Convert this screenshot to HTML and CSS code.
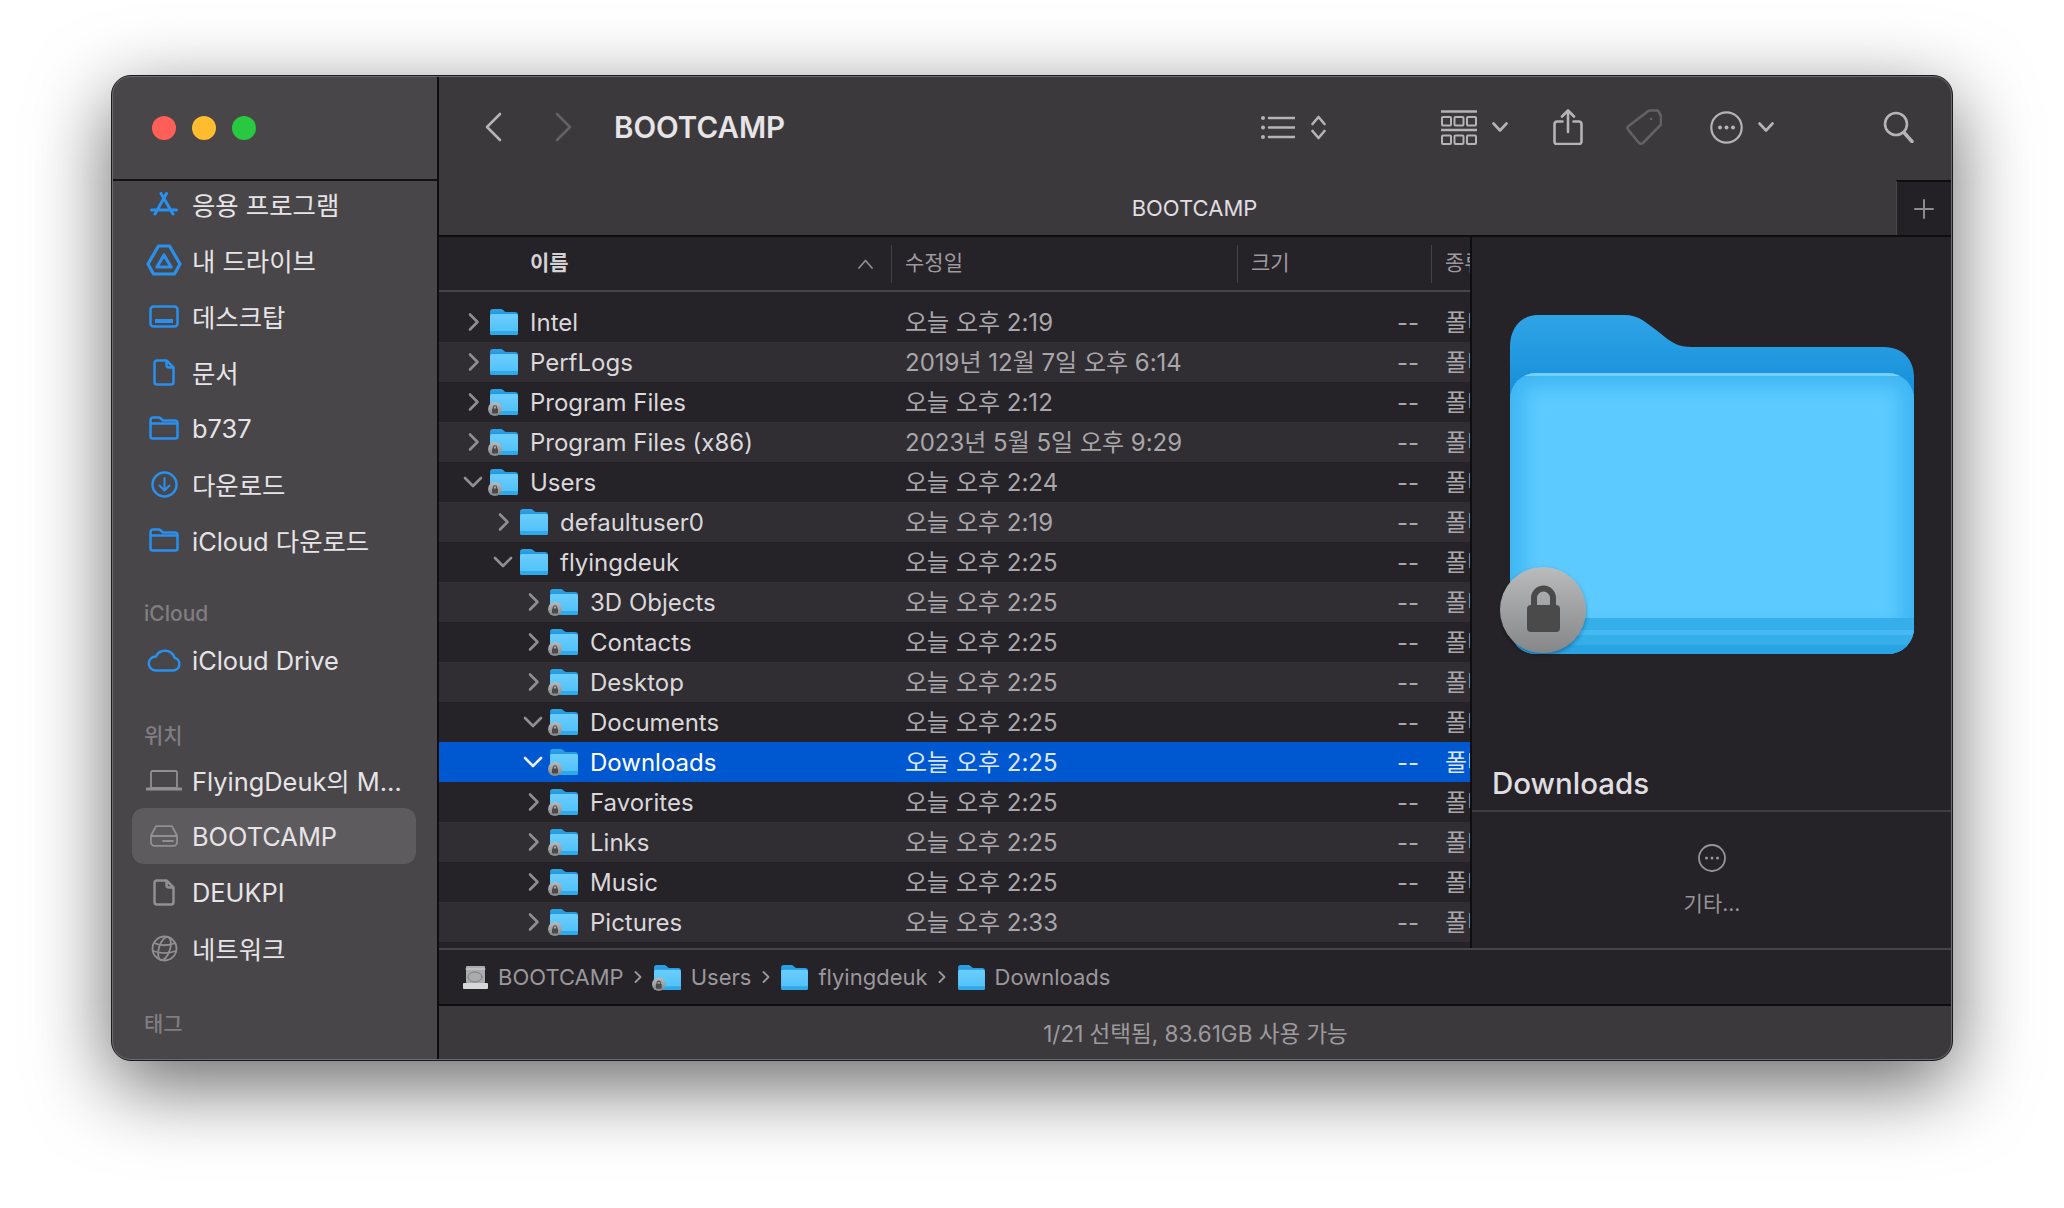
FILE: index.html
```html
<!DOCTYPE html>
<html lang="ko">

<head>
    <meta charset="UTF-8">
    <title>BOOTCAMP</title>
    <link rel="stylesheet" href="styles.css">
</head>

<body>
    <svg class="defs" width="0" height="0">
        <defs>
            <linearGradient id="fBack" x1="0" y1="0" x2="0" y2="1">
                <stop offset="0" stop-color="#2fa3e6" />
                <stop offset="1" stop-color="#0f8ad6" />
            </linearGradient>
            <linearGradient id="fFront" x1="0" y1="0" x2="0" y2="1">
                <stop offset="0" stop-color="#6ccdfb" />
                <stop offset="1" stop-color="#4cc0fa" />
            </linearGradient>
            <linearGradient id="badge" x1="0" y1="0" x2="0" y2="1">
                <stop offset="0" stop-color="#b9bbbd" />
                <stop offset="1" stop-color="#858687" />
            </linearGradient>
            <symbol id="folder" viewBox="0 0 28 26">
                <path fill="url(#fBack)" d="M0 3a3 3 0 0 1 3-3h8c2 0 3 3 5 3h9a3 3 0 0 1 3 3v6H0z" />
                <path fill="url(#fFront)" d="M0 7a2 2 0 0 1 2-2h24a2 2 0 0 1 2 2v17a2 2 0 0 1-2 2H2a2 2 0 0 1-2-2z" />
                <path fill="#2fa9ea" d="M0 22h28v2a2 2 0 0 1-2 2H2a2 2 0 0 1-2-2z" />
            </symbol>
            <symbol id="folderLock" viewBox="-3 0 31 29">
                <use href="#folder" x="0" y="0" width="28" height="26" />
                <circle cx="5" cy="20" r="7" fill="url(#badge)" />
                <rect x="2" y="19.5" width="6" height="5" rx="1" fill="#4a4a4a" />
                <path d="M3.3 20v-1.6a1.7 1.7 0 0 1 3.4 0V20" fill="none" stroke="#4a4a4a" stroke-width="1.1" />
            </symbol>
            <symbol id="chevR" viewBox="0 0 22 20">
                <path d="M8 2.5 15.5 10 8 17.5" />
            </symbol>
            <symbol id="chevD" viewBox="0 0 22 20">
                <path d="M3 6l8 8 8-8" />
            </symbol>
            <symbol id="sideFolder" viewBox="0 0 30 24">
                <path d="M1.5 4A2.5 2.5 0 0 1 4 1.5h6.5l3.5 3h12A2.5 2.5 0 0 1 28.5 7v13.5a2 2 0 0 1-2 2h-23a2 2 0 0 1-2-2zM1.5 7.5h27" />
            </symbol>
            <symbol id="sideDoc" viewBox="0 0 22 27">
                <path d="M4 1.5h9.5l7 7V23a2.5 2.5 0 0 1-2.5 2.5H4A2.5 2.5 0 0 1 1.5 23V4A2.5 2.5 0 0 1 4 1.5zM13.5 1.5V6a2.5 2.5 0 0 0 2.5 2.5h4.5" />
            </symbol>
        </defs>
    </svg>

    <div class="window">
        <aside class="sidebar">
            <div class="lights">
                <span class="light red"></span>
                <span class="light yellow"></span>
                <span class="light green"></span>
            </div>
            <div class="side-list">
                <div class="side-item">
                    <span class="side-icon blue"><svg width="28" height="25" viewBox="0 0 28 25"><path d="M16.5 1.5 5 22M11 1.5 23 22M1.5 18h25" stroke-width="3" /></svg></span>
                    <span class="side-label">응용 프로그램</span>
                </div>
                <div class="side-item">
                    <span class="side-icon blue"><svg width="36" height="32" viewBox="0 0 36 32"><path d="M12.5 2h11L34 20l-5.500 10h-21L2 20zM18 11l7 12H11z" stroke-width="3.2" /></svg></span>
                    <span class="side-label">내 드라이브</span>
                </div>
                <div class="side-item">
                    <span class="side-icon blue"><svg width="30" height="23" viewBox="0 0 30 23"><rect x="1.5" y="1.5" width="27" height="20" rx="3" /><path d="M6 16h18" stroke-width="4" stroke-linecap="butt" /></svg></span>
                    <span class="side-label">데스크탑</span>
                </div>
                <div class="side-item">
                    <span class="side-icon blue"><svg width="22" height="27"><use href="#sideDoc" /></svg></span>
                    <span class="side-label">문서</span>
                </div>
                <div class="side-item">
                    <span class="side-icon blue"><svg width="30" height="24"><use href="#sideFolder" /></svg></span>
                    <span class="side-label">b737</span>
                </div>
                <div class="side-item">
                    <span class="side-icon blue"><svg width="27" height="27" viewBox="0 0 27 27"><circle cx="13.5" cy="13.5" r="12" /><path d="M13.5 7v12M8.5 14.5l5 5 5-5" stroke-width="2" /></svg></span>
                    <span class="side-label">다운로드</span>
                </div>
                <div class="side-item">
                    <span class="side-icon blue"><svg width="30" height="24"><use href="#sideFolder" /></svg></span>
                    <span class="side-label">iCloud 다운로드</span>
                </div>

                <div class="side-head">iCloud</div>
                <div class="side-item">
                    <span class="side-icon blue"><svg width="34" height="23" viewBox="0 0 34 23"><path d="M8.5 21.5H26a6.5 6.5 0 0 0 1.5-12.8A10 10 0 0 0 9 7.5a7 7 0 0 0-.5 14z" /></svg></span>
                    <span class="side-label">iCloud Drive</span>
                </div>

                <div class="side-head">위치</div>
                <div class="side-item">
                    <span class="side-icon gray"><svg width="36" height="21" viewBox="0 0 36 21"><rect x="5" y="1" width="26" height="17" rx="1.5" stroke-width="1.8" /><path d="M0 19h36" stroke-width="3" /></svg></span>
                    <span class="side-label">FlyingDeuk의 MacBook Pro</span>
                </div>
                <div class="side-item active">
                    <span class="side-icon gray"><svg width="30" height="22" viewBox="0 0 30 22"><path d="M7 1.2h16l5 9.3v7a3.300 3.300 0 0 1-3.300 3.300H5.300A3.300 3.300 0 0 1 2 17.500v-7zM2 11h26M14 16h10" stroke-width="1.8" /></svg></span>
                    <span class="side-label">BOOTCAMP</span>
                </div>
                <div class="side-item">
                    <span class="side-icon gray"><svg width="22" height="27"><use href="#sideDoc" /></svg></span>
                    <span class="side-label">DEUKPI</span>
                </div>
                <div class="side-item">
                    <span class="side-icon gray"><svg width="27" height="27" viewBox="0 0 27 27"><g stroke-width="1.8"><circle cx="13.5" cy="13.5" r="12" /><ellipse cx="13.5" cy="13.5" rx="5.5" ry="12" transform="rotate(18 13.5 13.5)" /><path d="M3 8c6 3 15 3 21 0M2 16c7 2.5 16 2.5 23 0" /></g></svg></span>
                    <span class="side-label">네트워크</span>
                </div>

                <div class="side-head">태그</div>
            </div>
        </aside>

        <main class="main">
            <header class="toolbar">
                <svg class="tool back" width="22" height="32" viewBox="0 0 22 32"><path d="M17 3 4 16l13 13" /></svg>
                <svg class="tool forward dim" width="22" height="32" viewBox="0 0 22 32"><path d="M5 3l13 13L5 29" /></svg>
                <h1 class="title">BOOTCAMP</h1>
                <svg class="tool t-list" width="34" height="23" viewBox="0 0 34 23"><path d="M8 2h26M8 11.5h26M8 21h26" /><g fill="currentColor" stroke="none"><circle cx="2" cy="2" r="2" /><circle cx="2" cy="11.5" r="2" /><circle cx="2" cy="21" r="2" /></g></svg>
                <svg class="tool t-updown" width="15" height="25" viewBox="0 0 15 25"><path d="M1.5 9l6-7 6 7M1.5 16l6 7 6-7" /></svg>
                <svg class="tool t-grid" width="36" height="35" viewBox="0 0 36 35"><path d="M0 1.5h36M0 20h36" /><g stroke-width="2"><rect x="1" y="7" width="9" height="8.5" rx="1" /><rect x="13.5" y="7" width="9" height="8.5" rx="1" /><rect x="26" y="7" width="9" height="8.5" rx="1" /><rect x="1" y="25.5" width="9" height="8.5" rx="1" /><rect x="13.5" y="25.5" width="9" height="8.5" rx="1" /><rect x="26" y="25.5" width="9" height="8.5" rx="1" /></g></svg>
                <svg class="tool t-chev" width="16" height="10" viewBox="0 0 16 10"><path d="M1.5 1.5 8 8.5l6.5-7" /></svg>
                <svg class="tool t-share" width="30" height="36" viewBox="0 0 30 36"><path d="M15 1.5V23M9 7.5l6-6 6 6" /><path d="M9.5 12.5H4A2.5 2.5 0 0 0 1.5 15v17.5A2.5 2.5 0 0 0 4 35h22a2.5 2.5 0 0 0 2.5-2.5V15a2.5 2.5 0 0 0-2.5-2.5h-5.5" /></svg>
                <svg class="tool t-tag dim" width="36" height="36" viewBox="0 0 36 36"><path d="M23 1.5h9l3 5.5v8.500L17 34q-2 1.500-4 0L2 20.500q-1-1.500 0-3z" /><circle cx="25" cy="10" r="1.3" fill="currentColor" stroke="none" /></svg>
                <svg class="tool t-more" width="33" height="33" viewBox="0 0 33 33"><circle cx="16.5" cy="16.5" r="15.2" stroke-width="2.2" /><g fill="currentColor" stroke="none"><circle cx="10" cy="16.5" r="2" /><circle cx="16.5" cy="16.5" r="2" /><circle cx="23" cy="16.5" r="2" /></g></svg>
                <svg class="tool t-chev" width="16" height="10" viewBox="0 0 16 10"><path d="M1.5 1.5 8 8.5l6.5-7" /></svg>
                <svg class="tool t-search" width="31" height="32" viewBox="0 0 31 32"><circle cx="13" cy="13" r="11" /><path d="M21 21.5l8 9" stroke-width="3.5" /></svg>
            </header>

            <div class="tabbar">
                <div class="tab-label">BOOTCAMP</div>
                <div class="tab-add"><svg width="20" height="20" viewBox="0 0 20 20"><path d="M10 1v18M1 10h18" /></svg></div>
            </div>

            <div class="content">
                <section class="table">
                    <div class="thead">
                        <div class="th th-name">
                            <span>이름</span>
                            <svg width="15" height="10" viewBox="0 0 15 10"><path d="M1 9l6.5-7.500L14 9" /></svg>
                        </div>
                        <div class="th th-date">수정일</div>
                        <div class="th th-size">크기</div>
                        <div class="th th-kind">종류</div>
                    </div>
                    <div class="tbody">
                        <div class="row lvl0"><div class="c-name"><svg class="chev"><use href="#chevR" /></svg><svg class="ficon"><use href="#folder" /></svg><span>Intel</span></div><div class="c-date">오늘 오후 2:19</div><div class="c-size">--</div><div class="c-kind">폴더</div></div>
                        <div class="row lvl0"><div class="c-name"><svg class="chev"><use href="#chevR" /></svg><svg class="ficon"><use href="#folder" /></svg><span>PerfLogs</span></div><div class="c-date">2019년 12월 7일 오후 6:14</div><div class="c-size">--</div><div class="c-kind">폴더</div></div>
                        <div class="row lvl0"><div class="c-name"><svg class="chev"><use href="#chevR" /></svg><svg class="ficon lock"><use href="#folderLock" /></svg><span>Program Files</span></div><div class="c-date">오늘 오후 2:12</div><div class="c-size">--</div><div class="c-kind">폴더</div></div>
                        <div class="row lvl0"><div class="c-name"><svg class="chev"><use href="#chevR" /></svg><svg class="ficon lock"><use href="#folderLock" /></svg><span>Program Files (x86)</span></div><div class="c-date">2023년 5월 5일 오후 9:29</div><div class="c-size">--</div><div class="c-kind">폴더</div></div>
                        <div class="row lvl0"><div class="c-name"><svg class="chev"><use href="#chevD" /></svg><svg class="ficon lock"><use href="#folderLock" /></svg><span>Users</span></div><div class="c-date">오늘 오후 2:24</div><div class="c-size">--</div><div class="c-kind">폴더</div></div>
                        <div class="row lvl1"><div class="c-name"><svg class="chev"><use href="#chevR" /></svg><svg class="ficon"><use href="#folder" /></svg><span>defaultuser0</span></div><div class="c-date">오늘 오후 2:19</div><div class="c-size">--</div><div class="c-kind">폴더</div></div>
                        <div class="row lvl1"><div class="c-name"><svg class="chev"><use href="#chevD" /></svg><svg class="ficon"><use href="#folder" /></svg><span>flyingdeuk</span></div><div class="c-date">오늘 오후 2:25</div><div class="c-size">--</div><div class="c-kind">폴더</div></div>
                        <div class="row lvl2"><div class="c-name"><svg class="chev"><use href="#chevR" /></svg><svg class="ficon lock"><use href="#folderLock" /></svg><span>3D Objects</span></div><div class="c-date">오늘 오후 2:25</div><div class="c-size">--</div><div class="c-kind">폴더</div></div>
                        <div class="row lvl2"><div class="c-name"><svg class="chev"><use href="#chevR" /></svg><svg class="ficon lock"><use href="#folderLock" /></svg><span>Contacts</span></div><div class="c-date">오늘 오후 2:25</div><div class="c-size">--</div><div class="c-kind">폴더</div></div>
                        <div class="row lvl2"><div class="c-name"><svg class="chev"><use href="#chevR" /></svg><svg class="ficon lock"><use href="#folderLock" /></svg><span>Desktop</span></div><div class="c-date">오늘 오후 2:25</div><div class="c-size">--</div><div class="c-kind">폴더</div></div>
                        <div class="row lvl2"><div class="c-name"><svg class="chev"><use href="#chevD" /></svg><svg class="ficon lock"><use href="#folderLock" /></svg><span>Documents</span></div><div class="c-date">오늘 오후 2:25</div><div class="c-size">--</div><div class="c-kind">폴더</div></div>
                        <div class="row lvl2 selected"><div class="c-name"><svg class="chev"><use href="#chevD" /></svg><svg class="ficon lock"><use href="#folderLock" /></svg><span>Downloads</span></div><div class="c-date">오늘 오후 2:25</div><div class="c-size">--</div><div class="c-kind">폴더</div></div>
                        <div class="row lvl2"><div class="c-name"><svg class="chev"><use href="#chevR" /></svg><svg class="ficon lock"><use href="#folderLock" /></svg><span>Favorites</span></div><div class="c-date">오늘 오후 2:25</div><div class="c-size">--</div><div class="c-kind">폴더</div></div>
                        <div class="row lvl2"><div class="c-name"><svg class="chev"><use href="#chevR" /></svg><svg class="ficon lock"><use href="#folderLock" /></svg><span>Links</span></div><div class="c-date">오늘 오후 2:25</div><div class="c-size">--</div><div class="c-kind">폴더</div></div>
                        <div class="row lvl2"><div class="c-name"><svg class="chev"><use href="#chevR" /></svg><svg class="ficon lock"><use href="#folderLock" /></svg><span>Music</span></div><div class="c-date">오늘 오후 2:25</div><div class="c-size">--</div><div class="c-kind">폴더</div></div>
                        <div class="row lvl2"><div class="c-name"><svg class="chev"><use href="#chevR" /></svg><svg class="ficon lock"><use href="#folderLock" /></svg><span>Pictures</span></div><div class="c-date">오늘 오후 2:33</div><div class="c-size">--</div><div class="c-kind">폴더</div></div>
                    </div>
                </section>

                <section class="preview">
                    <svg class="big-folder" width="414" height="345" viewBox="0 0 414 345">
                        <defs>
                            <filter id="soft" x="-10%" y="-10%" width="120%" height="120%"><feGaussianBlur stdDeviation="9" /></filter>
                            <filter id="badgeShadow" x="-20%" y="-20%" width="140%" height="140%"><feDropShadow dx="0" dy="2" stdDeviation="2" flood-color="#000" flood-opacity=".35" /></filter>
                            <clipPath id="frontClip"><path d="M10 84a26 26 0 0 1 26-26h352a26 26 0 0 1 26 26v229a26 26 0 0 1-26 26H36a26 26 0 0 1-26-26z" /></clipPath>
                        </defs>
                        <path fill="url(#fBack)" d="M10 32C10 12 22 0 38 0h86c16 0 22 8 36 18 12 10 18 14 32 14h192c20 0 30 14 30 30v40H10z" />
                        <g clip-path="url(#frontClip)">
                            <rect x="10" y="58" width="404" height="281" fill="#3fb6f4" />
                            <rect x="24" y="72" width="376" height="240" fill="#5ccaff" filter="url(#soft)" />
                            <rect x="10" y="58" width="404" height="3" fill="#74d0fb" />
                            <rect x="10" y="303" width="404" height="36" fill="#35aeea" />
                            <rect x="10" y="315" width="404" height="5" fill="#44b9f3" />
                            <rect x="10" y="330" width="404" height="9" fill="#28a3e4" />
                        </g>
                        <circle cx="43" cy="295" r="43" fill="url(#badge)" filter="url(#badgeShadow)" />
                        <path d="M34 291V283a9.5 9.5 0 0 1 19 0v8" fill="none" stroke="#4a4a4a" stroke-width="6" />
                        <rect x="27" y="290" width="33" height="27" rx="4" fill="#4a4a4a" />
                    </svg>
                    <h2 class="preview-name">Downloads</h2>
                    <div class="preview-actions">
                        <svg width="28" height="28" viewBox="0 0 28 28"><circle cx="14" cy="14" r="13" /><g fill="currentColor" stroke="none"><circle cx="8.5" cy="14" r="1.5" /><circle cx="14" cy="14" r="1.5" /><circle cx="19.5" cy="14" r="1.5" /></g></svg>
                        <span>기타...</span>
                    </div>
                </section>
            </div>

            <nav class="pathbar">
                <svg class="disk" width="25" height="25" viewBox="0 0 25 25"><rect x="3" y="1" width="19" height="17" rx="1" fill="#a9abac" /><rect x="0" y="18" width="25" height="6" rx="1" fill="#d6d7d7" /><ellipse cx="12" cy="12" rx="7" ry="5" fill="none" stroke="#7c7e80" /><path d="M3 4h19" stroke="#cfd0d1" /></svg>
                <span class="crumb">BOOTCAMP</span>
                <svg class="sep" width="8" height="12" viewBox="0 0 8 12"><path d="M1.5 1 6.5 6l-5 5" /></svg>
                <svg class="ficon lock"><use href="#folderLock" /></svg>
                <span class="crumb">Users</span>
                <svg class="sep" width="8" height="12" viewBox="0 0 8 12"><path d="M1.5 1 6.5 6l-5 5" /></svg>
                <svg class="ficon"><use href="#folder" /></svg>
                <span class="crumb">flyingdeuk</span>
                <svg class="sep" width="8" height="12" viewBox="0 0 8 12"><path d="M1.5 1 6.5 6l-5 5" /></svg>
                <svg class="ficon"><use href="#folder" /></svg>
                <span class="crumb">Downloads</span>
            </nav>

            <footer class="statusbar">1/21 선택됨, 83.61GB 사용 가능</footer>
        </main>
    </div>
</body>

</html>
```

FILE: styles.css
```css
/* Finder window, dark mode */
* {
    box-sizing: border-box;
}

body {
    margin: 0;
    height: 1208px;
    padding: 75px 111px 0;
    background: #ffffff;
    font-family: Inter, "Noto Sans CJK KR", sans-serif;
    overflow: hidden;
}

svg {
    fill: none;
    stroke: currentColor;
    stroke-linecap: round;
    stroke-linejoin: round;
    flex: none;
}

.defs {
    position: absolute;
}

.window {
    position: relative;
    display: flex;
    width: 1842px;
    height: 986px;
    border: 1px solid #1b1a1c;
    border-radius: 20px;
    overflow: hidden;
    background: #3c393d;
    box-shadow: 0 24px 80px rgba(0, 0, 0, 0.6);
}

.window::after {
    content: "";
    position: absolute;
    inset: 0;
    border: 1.5px solid #6c6a6d;
    border-radius: 19px;
    pointer-events: none;
}

/* Sidebar */
.sidebar {
    width: 327px;
    flex: none;
    background: #484649;
    border-right: 2px solid #0e0d0f;
    overflow: hidden;
}

.lights {
    display: flex;
    gap: 16px;
    align-items: center;
    height: 105px;
    padding: 0 0 0 40px;
    border-bottom: 2px solid #121113;
}

.light {
    width: 24px;
    height: 24px;
    border-radius: 50%;
}

.red {
    background: #ff5f57;
}

.yellow {
    background: #febc2e;
}

.green {
    background: #28c840;
}

.side-list {
    margin-top: -5px;
}

.side-item {
    display: flex;
    align-items: center;
    gap: 8px;
    height: 56px;
    margin: 0 21px 0 20px;
    padding: 0 10px 0 12px;
    border-radius: 12px;
    color: #e6e4e6;
    font-size: 25.4px;
}

.side-item.active {
    background: #5e5b5f;
}

.side-icon {
    display: flex;
    align-items: center;
    justify-content: center;
    width: 40px;
    flex: none;
}

.side-icon svg {
    stroke-width: 2.5;
}

.blue {
    color: #2a90ee;
}

.gray {
    color: #918f92;
}

.side-label {
    white-space: nowrap;
    overflow: hidden;
    text-overflow: ellipsis;
}

.side-head {
    display: flex;
    align-items: center;
    height: 37px;
    margin-top: 27px;
    padding-left: 32px;
    color: #807e81;
    font-size: 21px;
    font-weight: 500;
}

/* Toolbar */
.main {
    flex: 1;
    min-width: 0;
    display: flex;
    flex-direction: column;
}

.toolbar {
    display: flex;
    align-items: center;
    height: 104px;
    padding: 0 38px 2px 44px;
    flex: none;
    background: #3c393d;
    color: #b5b3b6;
}

.tool {
    stroke-width: 2.6;
}

.dim {
    color: #636165;
}

.forward {
    margin-left: 47px;
}

.title {
    margin: 0 auto 0 40px;
    color: #e6e4e6;
    font-size: 29.5px;
    font-weight: 600;
}

.t-updown {
    margin-left: 16px;
}

.t-grid {
    margin-left: 115px;
}

.t-chev {
    margin-left: 15px;
}

.t-share {
    margin-left: 45px;
}

.t-tag {
    margin-left: 43px;
}

.t-more {
    margin-left: 48px;
}

.t-search {
    margin-left: 109px;
}

.tabbar {
    display: flex;
    height: 57px;
    flex: none;
    background: #3c393d;
    border-bottom: 2px solid #0e0d0f;
}

.tab-label {
    flex: 1;
    display: flex;
    align-items: center;
    justify-content: center;
    padding-left: 54px;
    color: #e0dee0;
    font-size: 22px;
}

.tab-add {
    display: flex;
    align-items: center;
    justify-content: center;
    width: 56px;
    padding: 1px 2px 0 0;
    background: #242126;
    border-top: 2px solid #0e0d0f;
    border-left: 1px solid #4a484b;
    color: #8d8b8e;
    stroke-width: 2;
}

/* File list */
.content {
    height: 711px;
    flex: none;
    display: flex;
}

.table {
    width: 1031px;
    flex: none;
    display: flex;
    flex-direction: column;
    background: #252228;
    overflow: hidden;
}

.thead {
    display: flex;
    align-items: center;
    height: 55px;
    border-bottom: 2px solid #47454a;
    flex: none;
    font-size: 21px;
    color: #9c9a9d;
}

.th {
    display: flex;
    align-items: center;
    height: 38px;
    padding-bottom: 5px;
    white-space: nowrap;
    overflow: hidden;
}

.th-name {
    width: 452px;
    justify-content: space-between;
    padding-right: 18px;
    padding-left: 91px;
    color: #d4d2d5;
    font-weight: 600;
    flex: none;
}

.th-name svg {
    margin-top: 5px;
    color: #8d8b8e;
    stroke-width: 1.8;
}

.th-date,
.th-size,
.th-kind {
    border-left: 1px solid #444246;
    padding-left: 13px;
    flex: none;
}

.th-date {
    width: 346px;
}

.th-size {
    width: 194px;
}

.th-kind {
    width: 39px;
}

.tbody {
    padding-top: 10px;
}

.row {
    display: grid;
    grid-template-columns: 466px 347px 167px 51px;
    align-items: center;
    height: 40px;
    font-size: 24px;
    color: #a9a7aa;
    white-space: nowrap;
}

.row:nth-child(even) {
    background: #302d33;
}

.row.selected {
    background: #0058d0;
    color: #dbe6f7;
}

.c-name {
    display: flex;
    align-items: center;
    color: #dad8da;
    padding-left: 23px;
}

.lvl1 .c-name {
    padding-left: 53px;
}

.lvl2 .c-name {
    padding-left: 83px;
}

.selected .c-name {
    color: #ffffff;
}

.c-date,
.c-kind {
    padding-bottom: 3px;
}

.chev {
    width: 22px;
    height: 20px;
    color: #908e91;
    stroke-width: 2.6;
}

.selected .chev {
    color: #e8eefa;
}

.ficon {
    width: 28px;
    height: 26px;
    margin: 0 12px 0 6px;
    stroke: none;
}

.ficon.lock {
    width: 31px;
    height: 29px;
    margin: 3px 12px 0 3px;
}

.c-size {
    text-align: right;
}

.c-kind {
    padding-left: 26px;
    overflow: hidden;
}

/* Preview pane */
.preview {
    flex: 1;
    display: flex;
    flex-direction: column;
    background: #252228;
    border-left: 2px solid #0e0d0f;
    min-width: 0;
}

.big-folder {
    margin: 78px 0 0 28px;
    stroke: none;
}

.preview-name {
    margin: 0;
    height: 51px;
    padding: 0 0 0 20px;
    margin-top: 101px;
    color: #e0dee0;
    font-size: 29.5px;
    line-height: 44px;
    font-weight: 500;
    border-bottom: 2px solid #3e3c40;
}

.preview-actions {
    flex: 1;
    display: flex;
    flex-direction: column;
    align-items: center;
    gap: 15px;
    padding-top: 32px;
    color: #969497;
    font-size: 21px;
    stroke-width: 1.8;
}

/* Bottom bars */
.pathbar {
    display: flex;
    align-items: center;
    height: 58px;
    flex: none;
    padding-left: 24px;
    background: #252228;
    border-top: 2px solid #47454a;
    border-bottom: 2px solid #0e0d0f;
    color: #9a989b;
    font-size: 22px;
}

.pathbar .disk {
    margin-right: 10px;
    stroke: none;
}

.pathbar .sep {
    margin: 0 11.5px 0 10.5px;
    stroke-width: 1.8;
}

.pathbar .ficon {
    width: 27px;
    height: 25px;
    margin: 0 10px 0 0;
}

.pathbar .ficon.lock {
    width: 30px;
    height: 28px;
    margin: 3px 10px 0 -3px;
}

.statusbar {
    height: 54px;
    flex: none;
    display: flex;
    align-items: center;
    justify-content: center;
    padding-bottom: 2px;
    background: #3c393d;
    color: #9c9a9d;
    font-size: 22.5px;
}
```
